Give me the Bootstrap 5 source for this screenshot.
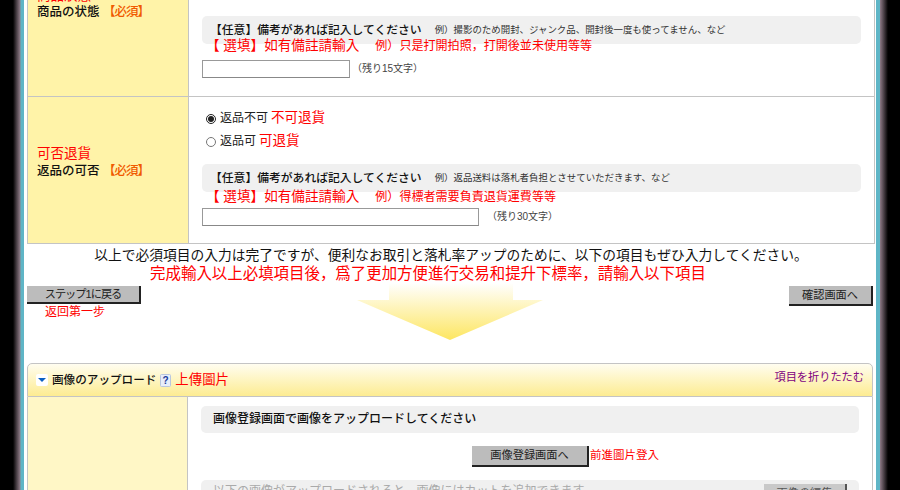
<!DOCTYPE html>
<html lang="ja">
<head>
  <meta charset="UTF-8">
  <title>商品情報の入力</title>
  <link href="https://cdn.jsdelivr.net/npm/bootstrap@5.3.2/dist/css/bootstrap.min.css" rel="stylesheet">
  <style>
    html, body { height: 490px; overflow: hidden; }
    body { background: #000; color: #222; font-family: "Liberation Sans", "Noto Sans CJK JP", sans-serif; font-size: 12px; line-height: 1.2; }
    .zh { font-family: "Liberation Sans", "Noto Sans CJK TC", sans-serif; color: #f00; }
    .page-frame { width: 900px; height: 490px; overflow: hidden; background: linear-gradient(90deg, #000 13px, #8d7a86 20px, #5fb5c6 21px, #5fb5c6 24px, #fff 24px, #fff 876px, #5fb5c6 876px, #5fb5c6 880px, #8d7a86 880px, #000 888px); }
    .page-inner { margin: -24px 0 0 27px; width: 848px; }
    .form-row { display: flex; border-bottom: 1px solid #c4c4c4; border-left: 1px solid #c4c4c4; border-right: 1px solid #c4c4c4; }
    .row-one { height: 121px; }
    .row-two { height: 147px; }
    .label-cell { width: 161px; flex: none; background: #fff3a8; border-right: 1px solid #c4c4c4; padding: 0 9px; font-size: 12.5px; font-weight: 500; color: #111; }
    .row-one .label-cell { padding-top: 11px; }
    .row-two .label-cell { padding-top: 48px; }
    .row-two .label-cell .zh { margin-bottom: 1px; }
    .label-cell .zh { font-size: 13.5px; font-weight: 400; line-height: 18px; }
    .req { color: #f05a00; letter-spacing: -1px; }
    .value-cell { flex: 1; padding-left: 13px; }
    .row-one .value-cell { padding-top: 40px; }
    .row-two .value-cell { padding-top: 10px; }
    .note-box { width: 659px; height: 28px; background: #f0f0f0; border-radius: 5px; padding: 0 8px; display: flex; align-items: center; font-size: 11.8px; font-weight: 500; color: #111; }
    .note-box small { font-size: 9.45px; font-weight: 400; color: #333; margin-left: 13px; }
    .note-zh { font-size: 13.6px; height: 16px; padding-left: 4px; line-height: 16px; white-space: pre; position: relative; }
    .note-tail { font-size: 12.05px; margin-left: 16px; }
    .row-one .note-zh { margin-top: -6px; margin-bottom: 6px; }
    .row-two .note-zh { margin-top: -3px; margin-bottom: 3px; }
    .row-two .note-box { margin-top: 11px; }
    .plain-input { display: block; height: 18px; border: 1px solid #999; border-bottom-color: #888; background: #fff; padding: 0; }
    .count-text { font-size: 10px; color: #444; margin-left: -2px; }
    .radio-line { height: 23px; font-size: 12px; }
    .radio-line input { width: 10px; height: 10px; margin: 0 4px 0 4px; accent-color: #222; }
    .radio-line .zh { font-size: 13.5px; margin-left: 3px; }
    .done-line { height: 18px; text-align: center; font-size: 13.75px; line-height: 18px; margin-top: 3px; color: #111; }
    .done-zh { height: 18px; text-align: center; font-size: 15.45px; line-height: 18px; padding-right: 46px; }
    .step-grid { display: grid; grid-template-columns: 1fr 186px 1fr; height: 80px; width: 846px; }
    .gray-btn { display: block; height: 18px; padding: 0; background: #bcbcbc; border: 0; border-right: 2px solid #222; border-bottom: 2px solid #222; border-radius: 0; font-size: 11.2px; line-height: 16px; color: #222; text-align: center; }
    .back-btn { width: 114px; margin-top: 3px; letter-spacing: -1px; }
    .next-btn { width: 84px; height: 20px; line-height: 18px; margin-top: 3px; margin-left: auto; }
    .back-zh { font-size: 12px; line-height: 14px; margin: 1px 0 0 18px; }
    .arrow-pic { display: block; }
    .section-head { height: 34px; width: 846px; background: linear-gradient(#fffdf0, #fdec92); border: 1px solid #c4c4c4; border-radius: 5px 5px 0 0; padding: 0 8px; display: flex; align-items: center; }
    .section-title { font-size: 11.6px; font-weight: 500; color: #111; margin: 0 4px 0 4px; white-space: nowrap; }
    .section-head .zh { font-size: 13.4px; }
    .fold-link { margin-left: auto; color: #800080; font-size: 11.2px; text-decoration: none; margin-top: -4px; }
    .form-row.row-three { height: 110px; width: 846px; border-bottom: 0; }
    .row-three .label-cell { background: #fff7c6; width: 160px; }
    .row-three .value-cell { padding-top: 9px; padding-left: 13px; }
    .row-three .note-box { width: 658px; height: 27px; padding: 0 12px; font-size: 12px; }
    .upload-line { height: 47px; display: flex; align-items: flex-start; padding: 13px 0 0 271px; }
    .upload-btn { width: 117px; height: 21px; line-height: 19px; }
    .upload-line .zh { font-size: 11.5px; line-height: 18px; margin-left: 1px; }
    .row-three .faded-box { color: #aaa; font-weight: 400; height: 30px; align-items: flex-start; padding-top: 4px; }
    .faded-btn { width: 83px; height: 20px; margin-left: auto; opacity: .75; flex: none; }
  </style>
</head>
<body>

  <div class="page-frame">
    <div class="page-inner">

      <div class="form-row row-one">
        <div class="label-cell">
          <div class="zh">商品狀態</div>
          <div>商品の状態 <span class="req">【必須】</span></div>
        </div>
        <div class="value-cell">
          <div class="note-box">【任意】備考があれば記入してください<small>例）撮影のため開封、ジャンク品、開封後一度も使ってません、など</small></div>
          <div class="zh note-zh">【 選填】如有備註請輸入<span class="note-tail">例）只是打開拍照，打開後並未使用等等</span></div>
          <div class="d-flex align-items-center gap-1">
            <input type="text" class="plain-input" style="width:148px">
            <span class="count-text">（残り15文字）</span>
          </div>
        </div>
      </div>

      <div class="form-row row-two">
        <div class="label-cell">
          <div class="zh">可否退貨</div>
          <div>返品の可否 <span class="req">【必須】</span></div>
        </div>
        <div class="value-cell">
          <div class="radio-line d-flex align-items-center"><input type="radio" name="ret" checked>返品不可 <span class="zh">不可退貨</span></div>
          <div class="radio-line d-flex align-items-center"><input type="radio" name="ret">返品可 <span class="zh">可退貨</span></div>
          <div class="note-box">【任意】備考があれば記入してください<small>例）返品送料は落札者負担とさせていただきます、など</small></div>
          <div class="zh note-zh">【 選填】如有備註請輸入<span class="note-tail">例）得標者需要負責退貨運費等等</span></div>
          <div class="d-flex align-items-center">
            <input type="text" class="plain-input" style="width:277px">
            <span class="count-text ms-2">（残り30文字）</span>
          </div>
        </div>
      </div>

      <div class="done-line">以上で必須項目の入力は完了ですが、便利なお取引と落札率アップのために、以下の項目もぜひ入力してください。</div>
      <div class="zh done-zh">完成輸入以上必填項目後，爲了更加方便進行交易和提升下標率，請輸入以下項目</div>

      <div class="step-grid">
        <div>
          <button type="button" class="btn gray-btn back-btn">ステップ1に戻る</button>
          <div class="zh back-zh">返回第一步</div>
        </div>
        <svg class="arrow-pic" width="186" height="60" viewBox="0 0 186 60">
          <defs>
            <linearGradient id="arrowFill" x1="0" y1="0" x2="0" y2="1">
              <stop offset="0" stop-color="#ffffff"/>
              <stop offset="1" stop-color="#fde661"/>
            </linearGradient>
          </defs>
          <polygon points="32,0 156,0 156,17 186,17 93,57 0,17 32,17" fill="url(#arrowFill)"/>
        </svg>
        <div>
          <button type="button" class="btn gray-btn next-btn">確認画面へ</button>
        </div>
      </div>

      <div class="section-head">
        <svg width="12" height="12" viewBox="0 0 12 12"><rect width="12" height="12" rx="2" fill="#fff"/><polygon points="2,4 10,4 6,8" fill="#0a5fc4"/></svg>
        <span class="section-title">画像のアップロード</span>
        <svg width="11" height="13" viewBox="0 0 11 13"><rect x=".5" y=".5" width="10" height="12" rx="1" fill="#e8eefa" stroke="#b9c6de"/><text x="5.5" y="10" text-anchor="middle" font-size="10" font-weight="700" font-family="Liberation Sans" fill="#1a3c9c">?</text></svg>
        <span class="zh ms-1">上傳圖片</span>
        <a href="#" class="fold-link">項目を折りたたむ</a>
      </div>

      <div class="form-row row-three">
        <div class="label-cell"></div>
        <div class="value-cell">
          <div class="note-box">画像登録画面で画像をアップロードしてください</div>
          <div class="upload-line">
            <button type="button" class="btn gray-btn upload-btn">画像登録画面へ</button>
            <span class="zh">前進圖片登入</span>
          </div>
          <div class="note-box faded-box">以下の画像がアップロードされると、画像にはカットを追加できます<button type="button" class="btn gray-btn faded-btn">画像の編集</button></div>
        </div>
      </div>

    </div>
  </div>

</body>
</html>
